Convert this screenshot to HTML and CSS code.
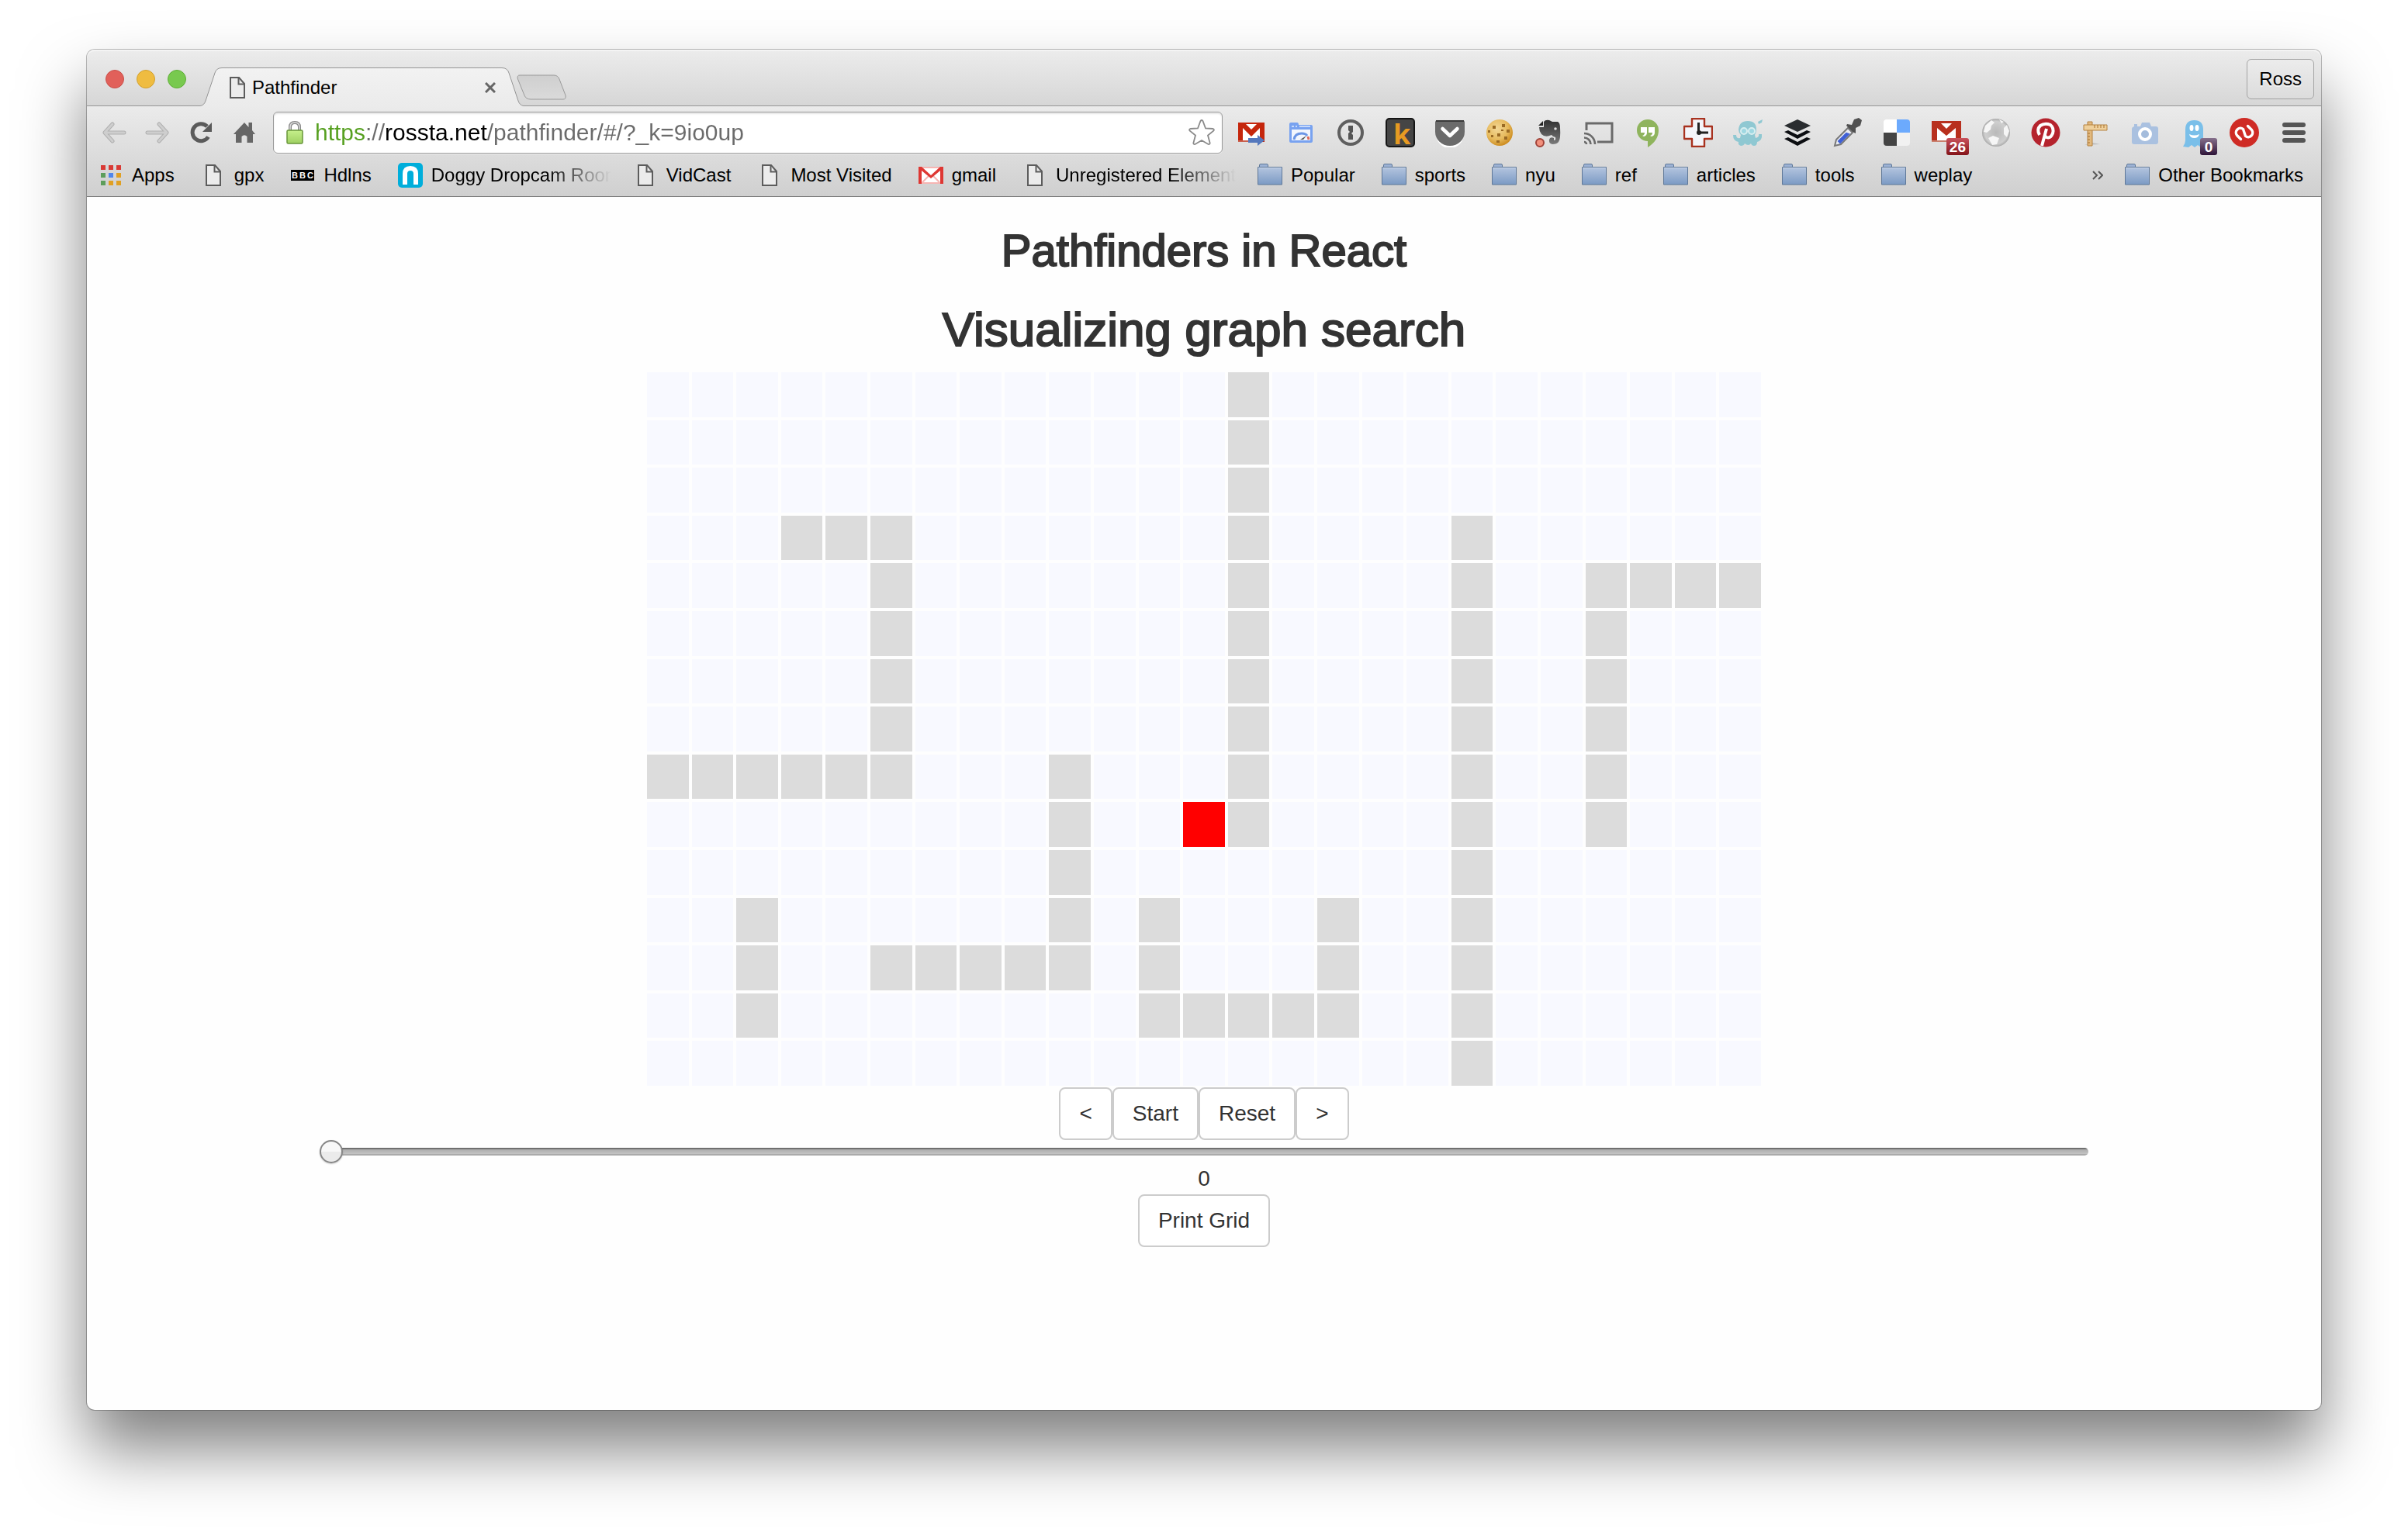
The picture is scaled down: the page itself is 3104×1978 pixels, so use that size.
FILE: index.html
```html
<!DOCTYPE html>
<html lang="en">
<head>
<meta charset="utf-8">
<title>Pathfinder</title>
<link rel="stylesheet" href="styles.css">
</head>
<body>
<svg class="defs" aria-hidden="true">
  <defs>
    <linearGradient id="g-folder" x1="0" y1="0" x2="0" y2="1"><stop offset="0" stop-color="#b4c5df"/><stop offset="1" stop-color="#7b9ac4"/></linearGradient>
    <linearGradient id="g-lock" x1="0" y1="0" x2="0" y2="1"><stop offset="0" stop-color="#c6f08c"/><stop offset="1" stop-color="#9fd062"/></linearGradient>
    <linearGradient id="g-tab" x1="0" y1="0" x2="0" y2="1"><stop offset="0" stop-color="#f2f2f2"/><stop offset="1" stop-color="#ebebeb"/></linearGradient>
    <linearGradient id="g-new" x1="0" y1="0" x2="0" y2="1"><stop offset="0" stop-color="#cfcfcf"/><stop offset="1" stop-color="#dadada"/></linearGradient>
    <linearGradient id="g-dark" x1="0" y1="0" x2="0" y2="1"><stop offset="0" stop-color="#303030"/><stop offset="1" stop-color="#7a7a7a"/></linearGradient>
    <radialGradient id="g-cookie" cx=".4" cy=".35" r=".7"><stop offset="0" stop-color="#f3d795"/><stop offset=".6" stop-color="#e6b95c"/><stop offset="1" stop-color="#c98516"/></radialGradient>
    <radialGradient id="g-globe" cx=".5" cy=".5" r=".5"><stop offset="0" stop-color="#b9b9b9"/><stop offset=".8" stop-color="#cfcfcf"/><stop offset="1" stop-color="#aaa"/></radialGradient>
    <symbol id="i-page" viewBox="0 0 20 28"><path d="M1 1h11l7 8v18H1z" fill="#ececec" stroke="#5c5c5c" stroke-width="2"/><path d="M11.500 1v8.500H19" fill="none" stroke="#5c5c5c" stroke-width="2"/></symbol>
    <symbol id="i-folder" viewBox="0 0 32 28"><path d="M2.500 5V2q0-1.500 1.500-1.500h8q1.500 0 1.500 1.500v3" fill="#9db2d4" stroke="#5f7898"/><path d="M.5 4.500h31v22.500H.5z" fill="url(#g-folder)" stroke="#5f7898"/><path d="M1.500 5.500h29" stroke="#ccd8ea"/></symbol>
  </defs>
</svg>

<div class="window">
  <header class="chrome">
    <div class="tabstrip">
      <div class="lights">
        <button class="light light-close" aria-label="Close"></button>
        <button class="light light-min" aria-label="Minimize"></button>
        <button class="light light-max" aria-label="Zoom"></button>
      </div>
      <div class="tab">
        <svg class="tab-cap" viewBox="0 0 28 50"><path d="M0 50V49Q5 49 7 43L19 7Q21 1 28 .5V50z" fill="url(#g-tab)"/><path d="M0 49.500Q5 49 7 43L19 7Q21 .5 28 .5" fill="none" stroke="#959595"/></svg>
        <div class="tab-body">
          <svg class="icon-page"><use href="#i-page"/></svg>
          <span class="tab-title">Pathfinder</span>
          <button class="tab-close" aria-label="Close tab"><svg viewBox="0 0 14 14"><path d="M1 1l12 12M13 1L1 13" stroke="#666" stroke-width="3"/></svg></button>
        </div>
        <svg class="tab-cap" viewBox="0 0 28 50"><path d="M28 50V49Q23 49 21 43L9 7Q7 1 0 .5V50z" fill="url(#g-tab)"/><path d="M28 49.500Q23 49 21 43L9 7Q7 .5 0 .5" fill="none" stroke="#959595"/></svg>
      </div>
      <button class="new-tab" aria-label="New tab"><svg viewBox="0 0 64 33"><path d="M4 1H48q5 0 7 5l8 21q1 5-3 5H18q-6 0-8-5L1.500 6Q0 1 4 1z" fill="url(#g-new)" stroke="#9a9a9a"/></svg></button>
      <button class="profile">Ross</button>
    </div>

    <div class="toolbar">
      <nav class="nav" aria-label="History">
        <button aria-label="Back"><svg viewBox="0 0 32 28"><path d="M14 3L4 14l10 11M5 14h24" fill="none" stroke="#b0b0b0" stroke-width="5" stroke-linecap="round" stroke-linejoin="round"/><path d="M14 3L4 14l10 11M5 14h24" fill="none" stroke="#cecece" stroke-width="3" stroke-linecap="round" stroke-linejoin="round"/></svg></button>
        <button aria-label="Forward"><svg viewBox="0 0 32 28"><path d="M18 3l10 11-10 11M27 14H3" fill="none" stroke="#b0b0b0" stroke-width="5" stroke-linecap="round" stroke-linejoin="round"/><path d="M18 3l10 11-10 11M27 14H3" fill="none" stroke="#cecece" stroke-width="3" stroke-linecap="round" stroke-linejoin="round"/></svg></button>
        <button aria-label="Reload"><svg viewBox="0 0 32 28"><path d="M25.500 19.500A11 11 0 1 1 24 6" fill="none" stroke="#5a5a5a" stroke-width="5"/><path d="M30 1v12H18z" fill="#5a5a5a"/></svg></button>
        <button aria-label="Home"><svg viewBox="0 0 32 28"><path d="M16 1l5.500 6V1H26v10l4 5h-3v11h-7.500v-8q-3.500-3.500-7 0v8H5V16H2z" fill="#666"/></svg></button>
      </nav>
      <div class="omnibox">
        <svg class="lock" viewBox="0 0 22 30"><path d="M5 13V8q0-6 6-6t6 6v5" fill="none" stroke="#888" stroke-width="4"/><path d="M5 13V8q0-6 6-6t6 6v5" fill="none" stroke="#ddd" stroke-width="1.500"/><rect x="1" y="12" width="20" height="17" rx="1.500" fill="url(#g-lock)" stroke="#68963a" stroke-width="1.500"/></svg>
        <input class="url" type="text" aria-label="Address" value="https://rossta.net/pathfinder/#/?_k=9io0up" spellcheck="false">
        <button class="star" aria-label="Bookmark this page"><svg viewBox="0 0 34 34"><path d="M15.500 2q1.500-2 3 0l3.500 9.500 9.500.5q2 .5 1 2.500L25 20.500l2.700 10q-.2 2-2.200 1.500L17 27l-8.500 5q-2 .5-2.200-1.500L9 20.500l-7.500-6q-1-2 1-2.500l9.500-.5z" fill="#fff" stroke="#8a8a8a" stroke-width="1.800"/></svg></button>
      </div>
      <div class="extensions">
        <button aria-label="Send with Gmail"><svg viewBox="0 0 38 38"><rect x="2" y="6" width="34" height="25" fill="#fff"/><path d="M2 6h34v25h-6V13L19 24 8 13v18H2z" fill="#c5260c"/><path d="M12 8h14l-7 7z" fill="#fff"/><path d="M2 30h16" stroke="#c9604e" stroke-width="2"/><path d="M15 26h12v-4l9 7-9 7v-4H15z" fill="#5478bd"/></svg></button>
        <button aria-label="Page speed"><svg viewBox="0 0 38 38"><path d="M4 8q0-2 2-2h8q2 0 2 3h16q2 0 2 2v19q0 2-2 2H6q-2 0-2-2z" fill="#78a2f0"/><path d="M7 11h3M12 11h2M17 11h14" stroke="#c6d9fb" stroke-width="2"/><rect x="7" y="15" width="24" height="14" fill="#f2f6fd"/><path d="M10 28q1-8 10-8 5 0 7 3" fill="none" stroke="#6b96e6" stroke-width="3"/><path d="M18 28l8-5-4 5z" fill="#555"/><path d="M28 24l1 4" stroke="#e06a5a" stroke-width="3"/></svg></button>
        <button aria-label="Password manager"><svg viewBox="0 0 38 38"><circle cx="19" cy="19" r="15" fill="none" stroke="#5f5f5f" stroke-width="4"/><path d="M16 10h6v8l-2 2 2 2v6h-6v-8l2-2-2-2z" fill="#555"/></svg></button>
        <button aria-label="Kippt"><svg viewBox="0 0 38 38"><rect x="1" y="1" width="36" height="36" rx="4" fill="#454545" stroke="#151515" stroke-width="2"/><text x="10" y="34" class="kglyph">k</text></svg></button>
        <button aria-label="Pocket"><svg viewBox="0 0 38 38"><path d="M1 21a18 18 0 0 0 36 0" fill="#fff"/><path d="M0 6q0-3 3-3h32q3 0 3 3v12a19 18 0 0 1-38 0z" fill="#6b6b6b"/><path d="M1 4h36" stroke="#3a3a3a" stroke-width="2"/><path d="M9.500 14l9.500 9 9.500-9" fill="none" stroke="#fff" stroke-width="4.500" stroke-linecap="round" stroke-linejoin="round"/></svg></button>
        <button aria-label="Cookies"><svg viewBox="0 0 38 38"><circle cx="19" cy="19" r="17" fill="url(#g-cookie)"/><g fill="#9a6a24"><path d="M10 10h4v4h-4zM22 8h4v4h-4zM28 15h4v4h-4zM16 20h4v4h-4zM8 22h3v3H8zM25 24h4v4h-4zM15 29h4v3h-4zM4 16h3v3H4zM21 15h3v2h-3z"/></g></svg></button>
        <button aria-label="Web clipper"><svg viewBox="0 0 38 38"><path d="M6 12h6V5q2-3 7-2l4 2h7q3 1 3 8 1 14-2 18-2 3-8 3-5-1-4-6 1-4 6-2v3q3 0 2-4-4-1-5-3-8 4-13-1-3-4-3-9z" fill="url(#g-dark)"/><path d="M5 10l6-6v6z" fill="#222"/><circle cx="27" cy="14" r="1.800" fill="#ddd"/><circle cx="7" cy="32" r="5" fill="#f2907c" stroke="#a04238" stroke-width="2"/></svg></button>
        <button aria-label="Cast"><svg viewBox="0 0 38 38"><path d="M3 16V7h33v24H17" fill="none" stroke="#6a6a6a" stroke-width="3"/><path d="M0 20a14 14 0 0 1 14 14M0 25.500a8.500 8.500 0 0 1 8.500 8.500M0 31a3 3 0 0 1 3 3" fill="none" stroke="#6a6a6a" stroke-width="2.600"/></svg></button>
        <button aria-label="Hangouts"><svg viewBox="0 0 38 38"><path d="M18 2a14 14 0 0 1 14 14q0 13-14 22v-8A14 14 0 0 1 18 2z" fill="#8fb45d"/><path d="M9 12h8v7q0 4-4 5l-2-1q3-1 3-4H9zM19 12h8v7q0 4-4 5l-2-1q3-1 3-4h-5z" fill="#fff"/></svg></button>
        <button aria-label="Time tracker"><svg viewBox="0 0 38 38"><path d="M11 1h16v10h10v16H27v10H11V27H1V11h10z" fill="#f4f5fa" stroke="#a8321f" stroke-width="2.400" stroke-linejoin="round"/><path d="M19.500 6v14M18 19h14" stroke="#222" stroke-width="3"/><circle cx="20" cy="19" r="3" fill="#222"/></svg></button>
        <button aria-label="Octopus"><svg viewBox="0 0 38 38"><path d="M19 4q11 0 11 11 0 4-2 7l1 4q5-1 4-5h4q1 8-6 10 0 5-4 5-3 0-4-3-3 4-8 0-1 3-5 3-4-1-3-5-7-1-7-9h4q0 5 5 4l1-4q-3-3-3-7Q8 4 19 4z" fill="#8fc8d2"/><circle cx="14" cy="17" r="4" fill="#9fd8e2" stroke="#d8eef0" stroke-width="2"/><circle cx="24" cy="17" r="4" fill="#9fd8e2" stroke="#d8eef0" stroke-width="2"/><path d="M32 5l6-3-1 4-4 2z" fill="#8fc8d2"/></svg></button>
        <button aria-label="Buffer"><svg viewBox="0 0 38 38"><path d="M19 2l17 8-17 8-17-8z" fill="#2a2d30"/><path d="M2 18l5-2 12 6 12-6 5 2-17 9zM2 27l5-2 12 6 12-6 5 2-17 9z" fill="#0c0e12"/></svg></button>
        <button aria-label="Colour picker"><svg viewBox="0 0 38 38"><path d="M3 36l2-8L20 13l6 6-15 15z" fill="#e9ecf2" stroke="#777" stroke-width="2"/><path d="M8 30L18 20l3 1L10 32z" fill="#3f60d6" stroke="#3f60d6" stroke-width="2"/><path d="M19 8l6 1 3-7 6-2 4 3-2 7-6 3v7l-4-2-8-8z" fill="#505050"/></svg></button>
        <button aria-label="Delicious"><svg viewBox="0 0 38 38"><path d="M19 2H6Q2 2 2 6v13h17z" fill="#fff"/><path d="M19 2h13q4 0 4 4v13H19z" fill="#6caafd"/><path d="M2 19h17v17H6q-4 0-4-4z" fill="#444"/><path d="M19 19h17v13q0 4-4 4H19z" fill="#f1f1f1"/></svg></button>
        <button aria-label="Mail, 26 unread"><svg viewBox="0 0 38 38"><rect y="4" width="38" height="27" fill="#fff"/><path d="M0 4h38v27h-7V13L19 23 7 13v18H0z" fill="#b8301e"/><path d="M12 7h14l-7 7z" fill="#fff"/><path d="M0 30h20" stroke="#c9806e" stroke-width="2"/></svg><span class="badge badge-red">26</span></button>
        <button aria-label="Globe"><svg viewBox="0 0 38 38"><circle cx="19" cy="19" r="18" fill="url(#g-globe)"/><path d="M5 10l8-7 4 3-4 4-1 5-5 4-4-1zM9 26l6-3 8 3-3 8-6 1zM29 13l4-4 3 8-3 8-4-4zM23 2l6 3-3 2z" fill="#f6f6f6"/></svg></button>
        <button aria-label="Pinterest"><svg viewBox="0 0 38 38"><circle cx="19" cy="19" r="18.500" fill="#b5232d"/><path d="M11 22q-4-7 1-12 6-4 13-1 5 4 3 11-3 7-8 5-2-1-2-3M20 14l-6 22" fill="none" stroke="#fff" stroke-width="4"/></svg></button>
        <button aria-label="Ruler"><svg viewBox="0 0 38 38"><path d="M5 35l20-1-10-2z" fill="#bbb"/><path d="M9 5h6v31H9z" fill="#e2b97e" stroke="#b5813f"/><path d="M4 9h30v7H4z" fill="#efd09c" stroke="#b5813f"/><path d="M18 9v4M22 9v4M26 9v4M30 9v4M9 20h3M9 24h3M9 28h3M9 32h3" stroke="#a8712c"/></svg></button>
        <button aria-label="Screenshot"><svg viewBox="0 0 38 38"><path d="M5 8h4v3h4l2-5h10l2 5h6q3 0 3 3v17q0 3-3 3H5q-3 0-3-3V14q0-2 3-3z" fill="#aac1e0"/><circle cx="19" cy="21" r="7" fill="#a4bcdc" stroke="#fff" stroke-width="4"/></svg></button>
        <button aria-label="Ghost, 0 blocked"><svg viewBox="0 0 38 38"><path d="M7 15Q7 3 18.500 3T30 15v21l-3 2-4-3-4 3-4-3-4 3-7-1q3-4 3-8z" fill="#7abfe9"/><ellipse cx="15" cy="13" rx="2.500" ry="4" fill="#fff"/><ellipse cx="22" cy="13" rx="2.500" ry="4" fill="#fff"/><path d="M12 21q6.500 3 13 0-1 5-6.500 5T12 21z" fill="#fff"/></svg><span class="badge badge-purple">0</span></button>
        <button aria-label="Authy"><svg viewBox="0 0 38 38"><circle cx="19" cy="19" r="19" fill="#cf2b25"/><path d="M14.500 27.500l-5-5a5.700 5.700 0 0 1 8-8L20.500 23.500a5.700 5.700 0 0 0 8-8l-5-5" fill="none" stroke="#fff" stroke-width="3.400" stroke-linecap="round" stroke-linejoin="round"/></svg></button>
        <button aria-label="Menu"><svg viewBox="0 0 38 38"><path d="M7 9h24M7 19h24M7 29h24" stroke="#555" stroke-width="6" stroke-linecap="round"/></svg></button>
      </div>
    </div>

    <nav class="bookmarks" aria-label="Bookmarks">
      <a href="#apps"><svg class="icon" viewBox="0 0 32 32"><g fill="#d93a35"><path d="M3 3h6v6H3zM13 3h6v6h-6zM23 3h6v6h-6z"/></g><path d="M3 13h6v6H3zM3 23h6v6H3z" fill="#5d9e5b"/><path d="M13 13h6v6h-6z" fill="#4f86ec"/><path d="M23 13h6v6h-6zM13 23h6v6h-6zM23 23h6v6h-6z" fill="#e0a023"/></svg><span>Apps</span></a>
      <a href="#gpx"><svg class="icon"><use href="#i-page" width="32" height="28" y="2"/></svg><span>gpx</span></a>
      <a href="#hdlns"><svg class="icon" viewBox="0 0 32 32"><path d="M1 9h30v14H1z"/><text x="2" y="20" class="bbc">B</text><text x="12" y="20" class="bbc">B</text><text x="22" y="20" class="bbc">C</text></svg><span>Hdlns</span></a>
      <a href="#dropcam"><svg class="icon" viewBox="0 0 32 32"><rect width="32" height="32" rx="5" fill="#00aedb"/><path d="M9 28V14q0-7 7-7t7 7v14" fill="none" stroke="#fff" stroke-width="6"/></svg><span class="long">Doggy Dropcam Room</span></a>
      <a href="#vidcast"><svg class="icon"><use href="#i-page" width="32" height="28" y="2"/></svg><span>VidCast</span></a>
      <a href="#most-visited"><svg class="icon"><use href="#i-page" width="32" height="28" y="2"/></svg><span>Most Visited</span></a>
      <a href="#gmail"><svg class="icon" viewBox="0 0 32 32"><path d="M0 5h32v22H0z" fill="#fff"/><path d="M4 6h24M4 26h24M5 25l9-9M27 25l-9-9" stroke="#f6b5b2" stroke-width="2"/><path d="M0 5h4l12 11L28 5h4v22h-4V10L16 20 4 10v17H0z" fill="#de3733"/></svg><span>gmail</span></a>
      <a href="#unregistered"><svg class="icon"><use href="#i-page" width="32" height="28" y="2"/></svg><span class="long">Unregistered Elements</span></a>
      <a href="#popular"><svg class="icon"><use href="#i-folder" width="32" height="28" y="1"/></svg><span>Popular</span></a>
      <a href="#sports"><svg class="icon"><use href="#i-folder" width="32" height="28" y="1"/></svg><span>sports</span></a>
      <a href="#nyu"><svg class="icon"><use href="#i-folder" width="32" height="28" y="1"/></svg><span>nyu</span></a>
      <a href="#ref"><svg class="icon"><use href="#i-folder" width="32" height="28" y="1"/></svg><span>ref</span></a>
      <a href="#articles"><svg class="icon"><use href="#i-folder" width="32" height="28" y="1"/></svg><span>articles</span></a>
      <a href="#tools"><svg class="icon"><use href="#i-folder" width="32" height="28" y="1"/></svg><span>tools</span></a>
      <a href="#weplay"><svg class="icon"><use href="#i-folder" width="32" height="28" y="1"/></svg><span>weplay</span></a>
      <button class="more" aria-label="More bookmarks"><svg viewBox="0 0 14 12"><path d="M1 1l5 5-5 5M8 1l5 5-5 5" fill="none" stroke="#555" stroke-width="2"/></svg></button>
      <a href="#other"><svg class="icon"><use href="#i-folder" width="32" height="28" y="1"/></svg><span>Other Bookmarks</span></a>
    </nav>
  </header>

  <main class="page">
    <h1>Pathfinders in React</h1>
    <h2>Visualizing graph search</h2>
    <div class="grid" id="grid"></div>
    <div class="buttons">
      <button class="btn">&lt;</button>
      <button class="btn">Start</button>
      <button class="btn">Reset</button>
      <button class="btn">&gt;</button>
    </div>
    <input class="slider" id="step" type="range" min="0" max="100" value="0" aria-label="Step">
    <output class="step" for="step">0</output>
    <button class="btn">Print Grid</button>
  </main>
</div>
<script src="script.js"></script>
</body>
</html>
```
FILE: styles.css
```css
* { box-sizing: border-box; }

body {
  margin: 0;
  padding: 64px 112px 160px;
  background: #fff;
  color: #333;
  font-family: "Helvetica Neue", "Liberation Sans", Arial, sans-serif;
  font-size: 28px;
  line-height: 40px;
}

button {
  margin: 0;
  padding: 0;
  border: 0;
  background: none;
  font: inherit;
  color: inherit;
}

svg { display: block; }
.defs { position: absolute; width: 0; height: 0; }

.window {
  min-height: calc(100vh - 224px);
  border-radius: 10px;
  background: #fefefe;
  box-shadow: 0 0 0 1px rgba(0, 0, 0, .26), 0 50px 84px rgba(0, 0, 0, .5);
}

/* Browser chrome */
.chrome {
  border-bottom: 1px solid #777;
  border-radius: 10px 10px 0 0;
  background: linear-gradient(#ebebeb, #cfcfcf) 0 73px / 100% 117px no-repeat;
  color: #000;
  font-size: 24px;
  line-height: 28px;
}

.tabstrip {
  display: flex;
  align-items: center;
  height: 73px;
  padding: 3px 9px 0 24px;
  border-radius: 10px 10px 0 0;
  background: linear-gradient(#ececec, #d6d6d6);
  box-shadow: inset 0 2px #f4f4f4, inset 0 -1px #959595;
}

.lights { display: flex; gap: 16px; margin-right: 18px; }
.light { width: 24px; height: 24px; border: 1px solid; border-radius: 50%; }
.light-close { background: #e1605a; border-color: #c94f49; }
.light-min { background: #efbc40; border-color: #d2a02e; }
.light-max { background: #78c94f; border-color: #5fae38; }

.tab { display: flex; align-self: flex-end; flex: 0 1 417px; height: 50px; }
.tab-cap { flex: none; width: 28px; height: 50px; }
.tab-body {
  display: flex;
  flex: 1;
  align-items: center;
  min-width: 0;
  padding: 0 8px 0 10px;
  border-top: 1px solid #959595;
  background: linear-gradient(#f2f2f2, #ebebeb);
}
.icon-page { flex: none; width: 20px; height: 28px; }
.tab-title { flex: 1; padding-left: 9px; }
.tab-close svg { width: 14px; height: 14px; }
.new-tab { margin: 20px auto 0 -9px; }
.new-tab svg { width: 64px; height: 33px; }
.profile {
  height: 52px;
  padding: 0 15px;
  border: 1px solid #a3a3a3;
  border-radius: 6px;
  background: linear-gradient(#ececec, #dcdcdc);
  text-shadow: 0 2px #f4f4f4;
}

.toolbar {
  display: flex;
  align-items: center;
  padding: 7px 16px 0 19px;
}
.nav { display: flex; gap: 24px; margin-right: 21px; }
.nav svg { width: 32px; height: 28px; }

.omnibox {
  display: flex;
  flex: 1;
  align-items: center;
  min-width: 0;
  height: 54px;
  margin-right: 18px;
  padding: 0 9px 0 16px;
  border: 1px solid #9b9b9b;
  border-radius: 6px;
  background: #fff;
  box-shadow: inset 0 2px 2px #e4e4e4, 0 1px #ececec;
}
.lock { flex: none; width: 22px; height: 30px; }
.url {
  flex: 1;
  min-width: 0;
  height: 40px;
  margin: 0 0 0 15px;
  padding: 0;
  border: 0;
  outline: 0;
  /* scheme green, host black, everything else grey */
  background: linear-gradient(90deg, #56a020 65px, #6b6b6b 65px 90px, #000 90px 222px, #6b6b6b 222px);
  -webkit-background-clip: text;
  background-clip: text;
  -webkit-text-fill-color: transparent;
  font: inherit;
  font-size: 30px;
}
.star svg { width: 34px; height: 34px; }

.extensions { display: flex; gap: 26px; }
.extensions button { position: relative; }
.extensions svg { width: 38px; height: 38px; }
.kglyph { fill: #e79a22; font: bold 36px "Open Sans", sans-serif; }
.badge {
  position: absolute;
  top: 26px;
  right: -10px;
  min-width: 22px;
  height: 22px;
  padding: 0 4px;
  border-radius: 3px;
  color: #fff;
  font-size: 19px;
  font-weight: bold;
  line-height: 23px;
}
.badge-red { background: linear-gradient(#c9525c, #84141a); }
.badge-purple { background: linear-gradient(#86708c, #2e1438); }

.bookmarks {
  display: flex;
  gap: 28px;
  align-items: center;
  height: 55px;
  padding: 0 13px 0 15px;
}
.bookmarks a {
  display: flex;
  gap: 11px;
  align-items: center;
  color: inherit;
  text-decoration: none;
  white-space: nowrap;
}
.icon { flex: none; width: 32px; height: 32px; }
.bookmarks span { padding-right: 6px; }
.bookmarks a:last-child span { padding-right: 10px; }
.bookmarks .long {
  width: 232px;
  padding: 0;
  overflow: hidden;
  -webkit-mask-image: linear-gradient(90deg, #000 64%, transparent);
  mask-image: linear-gradient(90deg, #000 64%, transparent);
}
.bbc { fill: #fff; font: bold 11px "Liberation Sans", sans-serif; }
.more { margin-left: auto; }
.more svg { width: 14px; height: 12px; }

/* Pathfinder page */
.page {
  display: flex;
  flex-direction: column;
  align-items: center;
  padding: 38px 0 60px;
}
h1, h2 {
  margin: 0;
  font-weight: 400;
  -webkit-text-stroke: 2px #333;
}
h1 { margin-bottom: 38px; font-size: 58px; line-height: 62px; }
h2 { margin-bottom: 22px; font-size: 62px; line-height: 66px; }

.grid {
  display: grid;
  grid-template-columns: repeat(25, 1fr);
  grid-template-rows: repeat(15, 1fr);
  gap: 4px;
  width: calc(50% - 4px);
  aspect-ratio: 1436 / 920;
}
.cell { background: #f8f9ff; }
.cell-wall { background: #dcdcdc; }
.cell-start { background: #f00; }

.buttons { display: flex; margin-top: 2px; }
.btn {
  padding: 12px 24px;
  border: 2px solid #ccc;
  border-radius: 8px;
  background: #fff;
}

.slider {
  -webkit-appearance: none;
  appearance: none;
  width: calc(100% - 600px);
  height: 30px;
  margin: 0;
  background: none;
}
.slider::-webkit-slider-runnable-track {
  height: 10px;
  border-radius: 5px;
  background: linear-gradient(#707070 2px, #acacac 2px, #c4c4c4 8px, #aaa 8px);
}
.slider::-webkit-slider-thumb {
  -webkit-appearance: none;
  width: 30px;
  height: 30px;
  margin-top: -10px;
  border: 2px solid #868686;
  border-radius: 50%;
  background: linear-gradient(#f8f8f8 50%, #ebebeb 50%);
  box-shadow: 0 1px 2px rgba(0, 0, 0, .2);
}
.step { height: 40px; }
```
FILE: script.js
```javascript
// '#' is a wall, 'S' the start, '.' open floor.
const maze = [
  '.............#...........',
  '.............#...........',
  '.............#...........',
  '...###.......#....#......',
  '.....#.......#....#..####',
  '.....#.......#....#..#...',
  '.....#.......#....#..#...',
  '.....#.......#....#..#...',
  '######...#...#....#..#...',
  '.........#..S#....#..#...',
  '.........#........#......',
  '..#......#.#...#..#......',
  '..#..#####.#...#..#......',
  '..#........#####..#......',
  '..................#......'
];

const kinds = { '.': 'cell', '#': 'cell cell-wall', 'S': 'cell cell-start' };
const grid = document.getElementById('grid');

for (const row of maze) {
  for (const mark of row) {
    const cell = document.createElement('div');
    cell.className = kinds[mark];
    grid.append(cell);
  }
}
```
